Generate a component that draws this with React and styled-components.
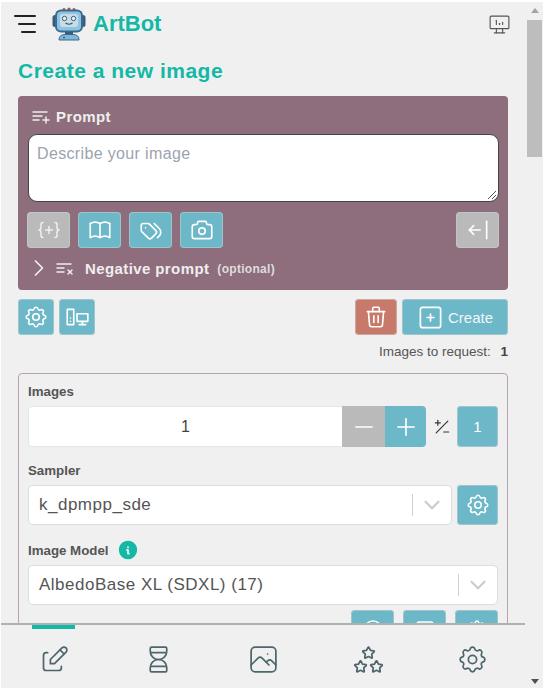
import React from "react";
import styled, { createGlobalStyle } from "styled-components";
import {
  TbBook,
  TbTags,
  TbCamera,
  TbSettings,
  TbDevicesPc,
  TbTrash,
  TbSquarePlus,
  TbArrowBarLeft,
  TbPlaylistAdd,
  TbPlaylistX,
  TbChevronRight,
  TbChevronDown,
  TbPlus,
  TbMinus,
  TbPlusMinus,
  TbInfoCircleFilled,
  TbEdit,
  TbHourglass,
  TbPhoto,
  TbStars,
  TbDeviceDesktopAnalytics,
  TbLayoutNavbar,
  TbCircle,
} from "react-icons/tb";

const GlobalStyle = createGlobalStyle`
  html, body {
    margin: 0;
    padding: 0;
    background: #fff;
    overflow: hidden;
  }
  * { box-sizing: border-box; }
`;

const Shell = styled.div`
  width: 543px;
  height: 688px;
  display: flex;
  font-family: "Liberation Sans", Arial, sans-serif;
  background: #f0f0f0;
  border-top: 2px solid #fff;
  border-left: 1px solid #fff;
`;

const Main = styled.div`
  width: 524px;
  display: flex;
  flex-direction: column;
  min-width: 0;
`;

const Content = styled.div`
  flex: 1;
  min-height: 0;
  overflow: hidden;
  padding: 6px 17px 0 17px;
`;

const Header = styled.header`
  height: 32px;
  display: flex;
  align-items: center;
  margin-left: -4px;
`;

const Burger = styled.div`
  width: 22px;
  display: flex;
  flex-direction: column;
  align-items: flex-end;
  gap: 6px;
  margin-right: 16px;
  span {
    display: block;
    height: 2px;
    border-radius: 1px;
    background: #222;
  }
  span:nth-child(1) { width: 22px; }
  span:nth-child(2) { width: 18px; }
  span:nth-child(3) { width: 15px; }
`;

const Brand = styled.div`
  color: #14b8a6;
  font-size: 22px;
  font-weight: 700;
  margin-left: 7px;
`;

const StatusIcon = styled.div`
  margin-left: auto;
  margin-right: -4px;
  color: #555;
  display: flex;
  font-size: 25px;
  svg { stroke-width: 1.1; }
`;

const Title = styled.h1`
  margin: 18px 0 0;
  height: 25px;
  font-size: 21px;
  line-height: 25px;
  font-weight: 700;
  color: #14b8a6;
  letter-spacing: 0.5px;
  white-space: nowrap;
`;

const PromptPanel = styled.section`
  margin-top: 13px;
  height: 194px;
  background: #8e6d7c;
  border-radius: 4px;
  padding: 8px 9px 0 9px;
`;

const PanelRow = styled.div`
  display: flex;
  align-items: center;
  color: #eee;
  font-size: 15px;
  letter-spacing: 0.4px;
  font-weight: 700;
  margin-left: ${(p) => p.$indent || 0}px;
  margin-top: ${(p) => p.$top || 0}px;
  svg { stroke-width: 1.5; flex: none; }
`;

const PromptIcon = styled(TbPlaylistAdd)`
  font-size: 24px;
  margin-right: 4px;
`;

const NegativeIcon = styled(TbPlaylistX)`
  font-size: 24px;
  margin-right: 9px;
`;

const Chevron = styled(TbChevronRight)`
  font-size: 28px;
  margin-left: -2px;
  margin-right: -1px;
`;

const PromptBox = styled.div`
  margin: 6px 0 0 1px;
  height: 68px;
  background: #fff;
  border: 1px solid #444;
  border-radius: 9px;
  padding: 10px 8px;
  font-size: 16px;
  letter-spacing: 0.35px;
  color: #9ca3af;
  position: relative;
  svg {
    position: absolute;
    right: 1px;
    bottom: 1px;
  }
`;

const ToolRow = styled.div`
  display: flex;
  justify-content: ${(p) => p.$justify || "flex-start"};
  gap: ${(p) => p.$gap || 8}px;
  margin-top: ${(p) => p.$top || 0}px;
  align-items: flex-start;
`;

const COLORS = { teal: "#6cb8c8", grey: "#bababa", red: "#c77a6a" };

const IconButton = styled.div`
  width: ${(p) => p.$w || 43}px;
  height: ${(p) => p.$h || 36}px;
  flex: none;
  display: flex;
  align-items: center;
  justify-content: center;
  gap: 4px;
  background: ${(p) => COLORS[p.$color || "teal"]};
  border-radius: 4px;
  box-shadow: 0 0 0 1px rgba(200, 205, 208, 0.55) inset;
  color: #fff;
  font-size: ${(p) => p.$size || 26}px;
  margin-left: ${(p) => (p.$push ? "auto" : "0")};
  svg { stroke-width: 1.5; }
`;

const ButtonLabel = styled.span`
  font-size: 15px;
  color: #f2f7f8;
`;

const Optional = styled.span`
  font-size: 12px;
  letter-spacing: 0.3px;
  margin-left: 8px;
  font-weight: 700;
  color: #ddd;
  position: relative;
  top: 1px;
`;

const RequestLine = styled.div`
  margin-top: 9px;
  height: 15px;
  text-align: right;
  font-size: 13.5px;
  line-height: 15px;
  color: #555;
  white-space: nowrap;
  b {
    margin-left: 6px;
    color: #444;
  }
`;

const OptionsCard = styled.section`
  margin-top: 14px;
  border: 1px solid #b5a5ac;
  border-radius: 4px;
  padding: 9px 9px 30px 9px;
`;

const FieldLabel = styled.div`
  display: flex;
  align-items: center;
  gap: 8px;
  height: 16px;
  font-size: 13.3px;
  font-weight: 700;
  color: #555;
  margin-top: ${(p) => p.$top || 0}px;
  svg {
    color: #14b8a6;
    font-size: 22px;
  }
`;

const FieldRow = styled.div`
  display: flex;
  align-items: center;
  margin-top: ${(p) => p.$top || 7}px;
  gap: ${(p) => p.$gap || 0}px;
`;

const NumberInput = styled.div`
  flex: 1;
  height: 41px;
  display: flex;
  align-items: center;
  justify-content: center;
  background: #fff;
  border: 1px solid #e5e5e5;
  border-right: 0;
  border-radius: 4px 0 0 4px;
  font-size: 16px;
  color: #444;
`;

const StepButton = styled.div`
  width: ${(p) => p.$w}px;
  height: 41px;
  flex: none;
  display: flex;
  align-items: center;
  justify-content: center;
  background: ${(p) => COLORS[p.$color]};
  color: #fff;
  font-size: 28px;
  border-radius: ${(p) => p.$radius || 0};
  svg { stroke-width: 1.4; }
`;

const PlusMinus = styled.div`
  width: 31px;
  flex: none;
  display: flex;
  justify-content: center;
  font-size: 20px;
  color: #333;
  svg { stroke-width: 1.4; }
`;

const SelectBox = styled.div`
  flex: 1;
  height: 40px;
  display: flex;
  align-items: center;
  background: #fff;
  border: 1px solid #ddd;
  border-radius: 5px;
  padding-left: 10px;
  font-size: 17px;
  color: #555;
  letter-spacing: 0.5px;
`;

const SelectArrow = styled.div`
  margin-left: auto;
  width: 39px;
  height: 22px;
  flex: none;
  display: flex;
  align-items: center;
  justify-content: center;
  border-left: 1px solid #d0d0d0;
  color: #ccc;
  font-size: 26px;
`;

const BottomNav = styled.nav`
  height: 65px;
  flex: none;
  border-top: 2px solid #aab2b2;
  padding-left: 1px;
  display: grid;
  grid-template-columns: repeat(5, 1fr);
  background: #f0f0f0;
`;

const NavItem = styled.div`
  display: flex;
  justify-content: center;
  padding-top: 18px;
  font-size: 33px;
  color: #4d666b;
  position: relative;
  svg { stroke-width: 1.25; }
  &::before {
    content: "";
    display: ${(p) => (p.$active ? "block" : "none")};
    position: absolute;
    top: 0;
    left: 30px;
    width: 43px;
    height: 4px;
    background: #14b8a6;
  }
`;

const Scrollbar = styled.div`
  width: 17px;
  margin-left: auto;
  display: flex;
  flex-direction: column;
  align-items: center;
  background: #f0f0f0;
`;

const ScrollThumb = styled.div`
  width: 15px;
  height: 137px;
  margin-top: 7px;
  background: #bdbdbd;
`;

const ScrollArrow = styled.div`
  width: 0;
  height: 0;
  border-left: 4px solid transparent;
  border-right: 4px solid transparent;
  ${(p) =>
    p.$down
      ? "border-top: 5px solid #505050; margin-top: auto; margin-bottom: 4px;"
      : "border-bottom: 5px solid #a3a3a3; margin-top: 6px;"}
`;

const RobotLogo = () => (
  <svg width="34" height="34" viewBox="0 0 34 34">
    <circle cx="12" cy="2.5" r="1.5" fill="#a0524f" />
    <circle cx="17" cy="2" r="1.5" fill="#a0524f" />
    <circle cx="22" cy="2.5" r="1.5" fill="#a0524f" />
    <rect x="0.5" y="8" width="5" height="12" rx="2.5" fill="#3d5a78" />
    <rect x="28.5" y="8" width="5" height="12" rx="2.5" fill="#3d5a78" />
    <rect x="3" y="2.5" width="28" height="23" rx="6" fill="#3d6a8c" />
    <rect x="5" y="4.5" width="24" height="19" rx="4" fill="#8cc4e4" />
    <rect x="8" y="7" width="18" height="13" rx="3" fill="#c9dde6" />
    <circle cx="12.5" cy="11.5" r="2.2" fill="#e9f1f4" stroke="#3d5a78" />
    <circle cx="21.5" cy="11.5" r="2.2" fill="#e9f1f4" stroke="#3d5a78" />
    <path d="M13.5 16 Q17 18.5 20.5 16" fill="none" stroke="#3d5a78" strokeWidth="1.2" />
    <rect x="13" y="25" width="8" height="3" fill="#3d5a78" />
    <path d="M7 33 Q7 27.5 13 27.5 H21 Q27 27.5 27 33 Z" fill="#7fb8dc" stroke="#3d6a8c" />
    <circle cx="12" cy="30.5" r="1" fill="#3d5a78" />
  </svg>
);

const BracesPlus = () => (
  <svg width="24" height="24" viewBox="0 0 24 24" fill="none" stroke="#f0f0f0" strokeLinecap="round" strokeLinejoin="round">
    <path d="M6 4.5a2 2 0 0 0-2 2v3a2.5 2.5 0 0 1-2 2.5 2.5 2.5 0 0 1 2 2.5v3a2 2 0 0 0 2 2" />
    <path d="M18 4.5a2 2 0 0 1 2 2v3a2.5 2.5 0 0 0 2 2.5 2.5 2.5 0 0 0-2 2.5v3a2 2 0 0 1-2 2" />
    <path d="M8.5 12h7M12 8.5v7" />
  </svg>
);

const ResizeGrip = () => (
  <svg width="12" height="12" viewBox="0 0 12 12" stroke="#555" strokeWidth="1">
    <path d="M3 11 L11 3 M7 11 L11 7" />
  </svg>
);

export default function App() {
  return (
    <>
      <GlobalStyle />
      <Shell>
        <Main>
          <Content>
            <Header>
              <Burger>
                <span />
                <span />
                <span />
              </Burger>
              <RobotLogo />
              <Brand>ArtBot</Brand>
              <StatusIcon>
                <TbDeviceDesktopAnalytics />
              </StatusIcon>
            </Header>

            <Title>Create a new image</Title>

            <PromptPanel>
              <PanelRow $indent={1}>
                <PromptIcon />
                Prompt
              </PanelRow>
              <PromptBox>
                Describe your image
                <ResizeGrip />
              </PromptBox>
              <ToolRow $top={10}>
                <IconButton $color="grey">
                  <BracesPlus />
                </IconButton>
                <IconButton>
                  <TbBook />
                </IconButton>
                <IconButton>
                  <TbTags />
                </IconButton>
                <IconButton>
                  <TbCamera />
                </IconButton>
                <IconButton $color="grey" $push>
                  <TbArrowBarLeft />
                </IconButton>
              </ToolRow>
              <PanelRow $top={6}>
                <Chevron />
                <NegativeIcon />
                Negative prompt
                <Optional>(optional)</Optional>
              </PanelRow>
            </PromptPanel>

            <ToolRow $top={9} $gap={5}>
              <IconButton $w={36}>
                <TbSettings />
              </IconButton>
              <IconButton $w={36}>
                <TbDevicesPc />
              </IconButton>
              <IconButton $w={42} $color="red" $push>
                <TbTrash />
              </IconButton>
              <IconButton $w={106} $size={27}>
                <TbSquarePlus />
                <ButtonLabel>Create</ButtonLabel>
              </IconButton>
            </ToolRow>

            <RequestLine>
              Images to request: <b>1</b>
            </RequestLine>

            <OptionsCard>
              <FieldLabel>Images</FieldLabel>
              <FieldRow>
                <NumberInput>1</NumberInput>
                <StepButton $w={43} $color="grey">
                  <TbMinus />
                </StepButton>
                <StepButton $w={41} $color="teal" $radius="0 4px 4px 0">
                  <TbPlus />
                </StepButton>
                <PlusMinus>
                  <TbPlusMinus />
                </PlusMinus>
                <IconButton $h={41} $w={41} $size={15}>
                  1
                </IconButton>
              </FieldRow>

              <FieldLabel $top={15}>Sampler</FieldLabel>
              <FieldRow $gap={5}>
                <SelectBox>
                  k_dpmpp_sde
                  <SelectArrow>
                    <TbChevronDown />
                  </SelectArrow>
                </SelectBox>
                <IconButton $h={40} $w={41}>
                  <TbSettings />
                </IconButton>
              </FieldRow>

              <FieldLabel $top={17}>
                Image Model
                <TbInfoCircleFilled />
              </FieldLabel>
              <FieldRow>
                <SelectBox>
                  AlbedoBase XL (SDXL) (17)
                  <SelectArrow>
                    <TbChevronDown />
                  </SelectArrow>
                </SelectBox>
              </FieldRow>

              <ToolRow $top={5} $gap={9} $justify="flex-end">
                <IconButton $h={40} $size={24}>
                  <TbCircle />
                </IconButton>
                <IconButton $h={40} $size={24}>
                  <TbLayoutNavbar />
                </IconButton>
                <IconButton $h={40} $size={24}>
                  <TbSettings />
                </IconButton>
              </ToolRow>
            </OptionsCard>
          </Content>

          <BottomNav>
            <NavItem $active>
              <TbEdit />
            </NavItem>
            <NavItem>
              <TbHourglass />
            </NavItem>
            <NavItem>
              <TbPhoto />
            </NavItem>
            <NavItem>
              <TbStars />
            </NavItem>
            <NavItem>
              <TbSettings />
            </NavItem>
          </BottomNav>
        </Main>

        <Scrollbar>
          <ScrollArrow />
          <ScrollThumb />
          <ScrollArrow $down />
        </Scrollbar>
      </Shell>
    </>
  );
}
